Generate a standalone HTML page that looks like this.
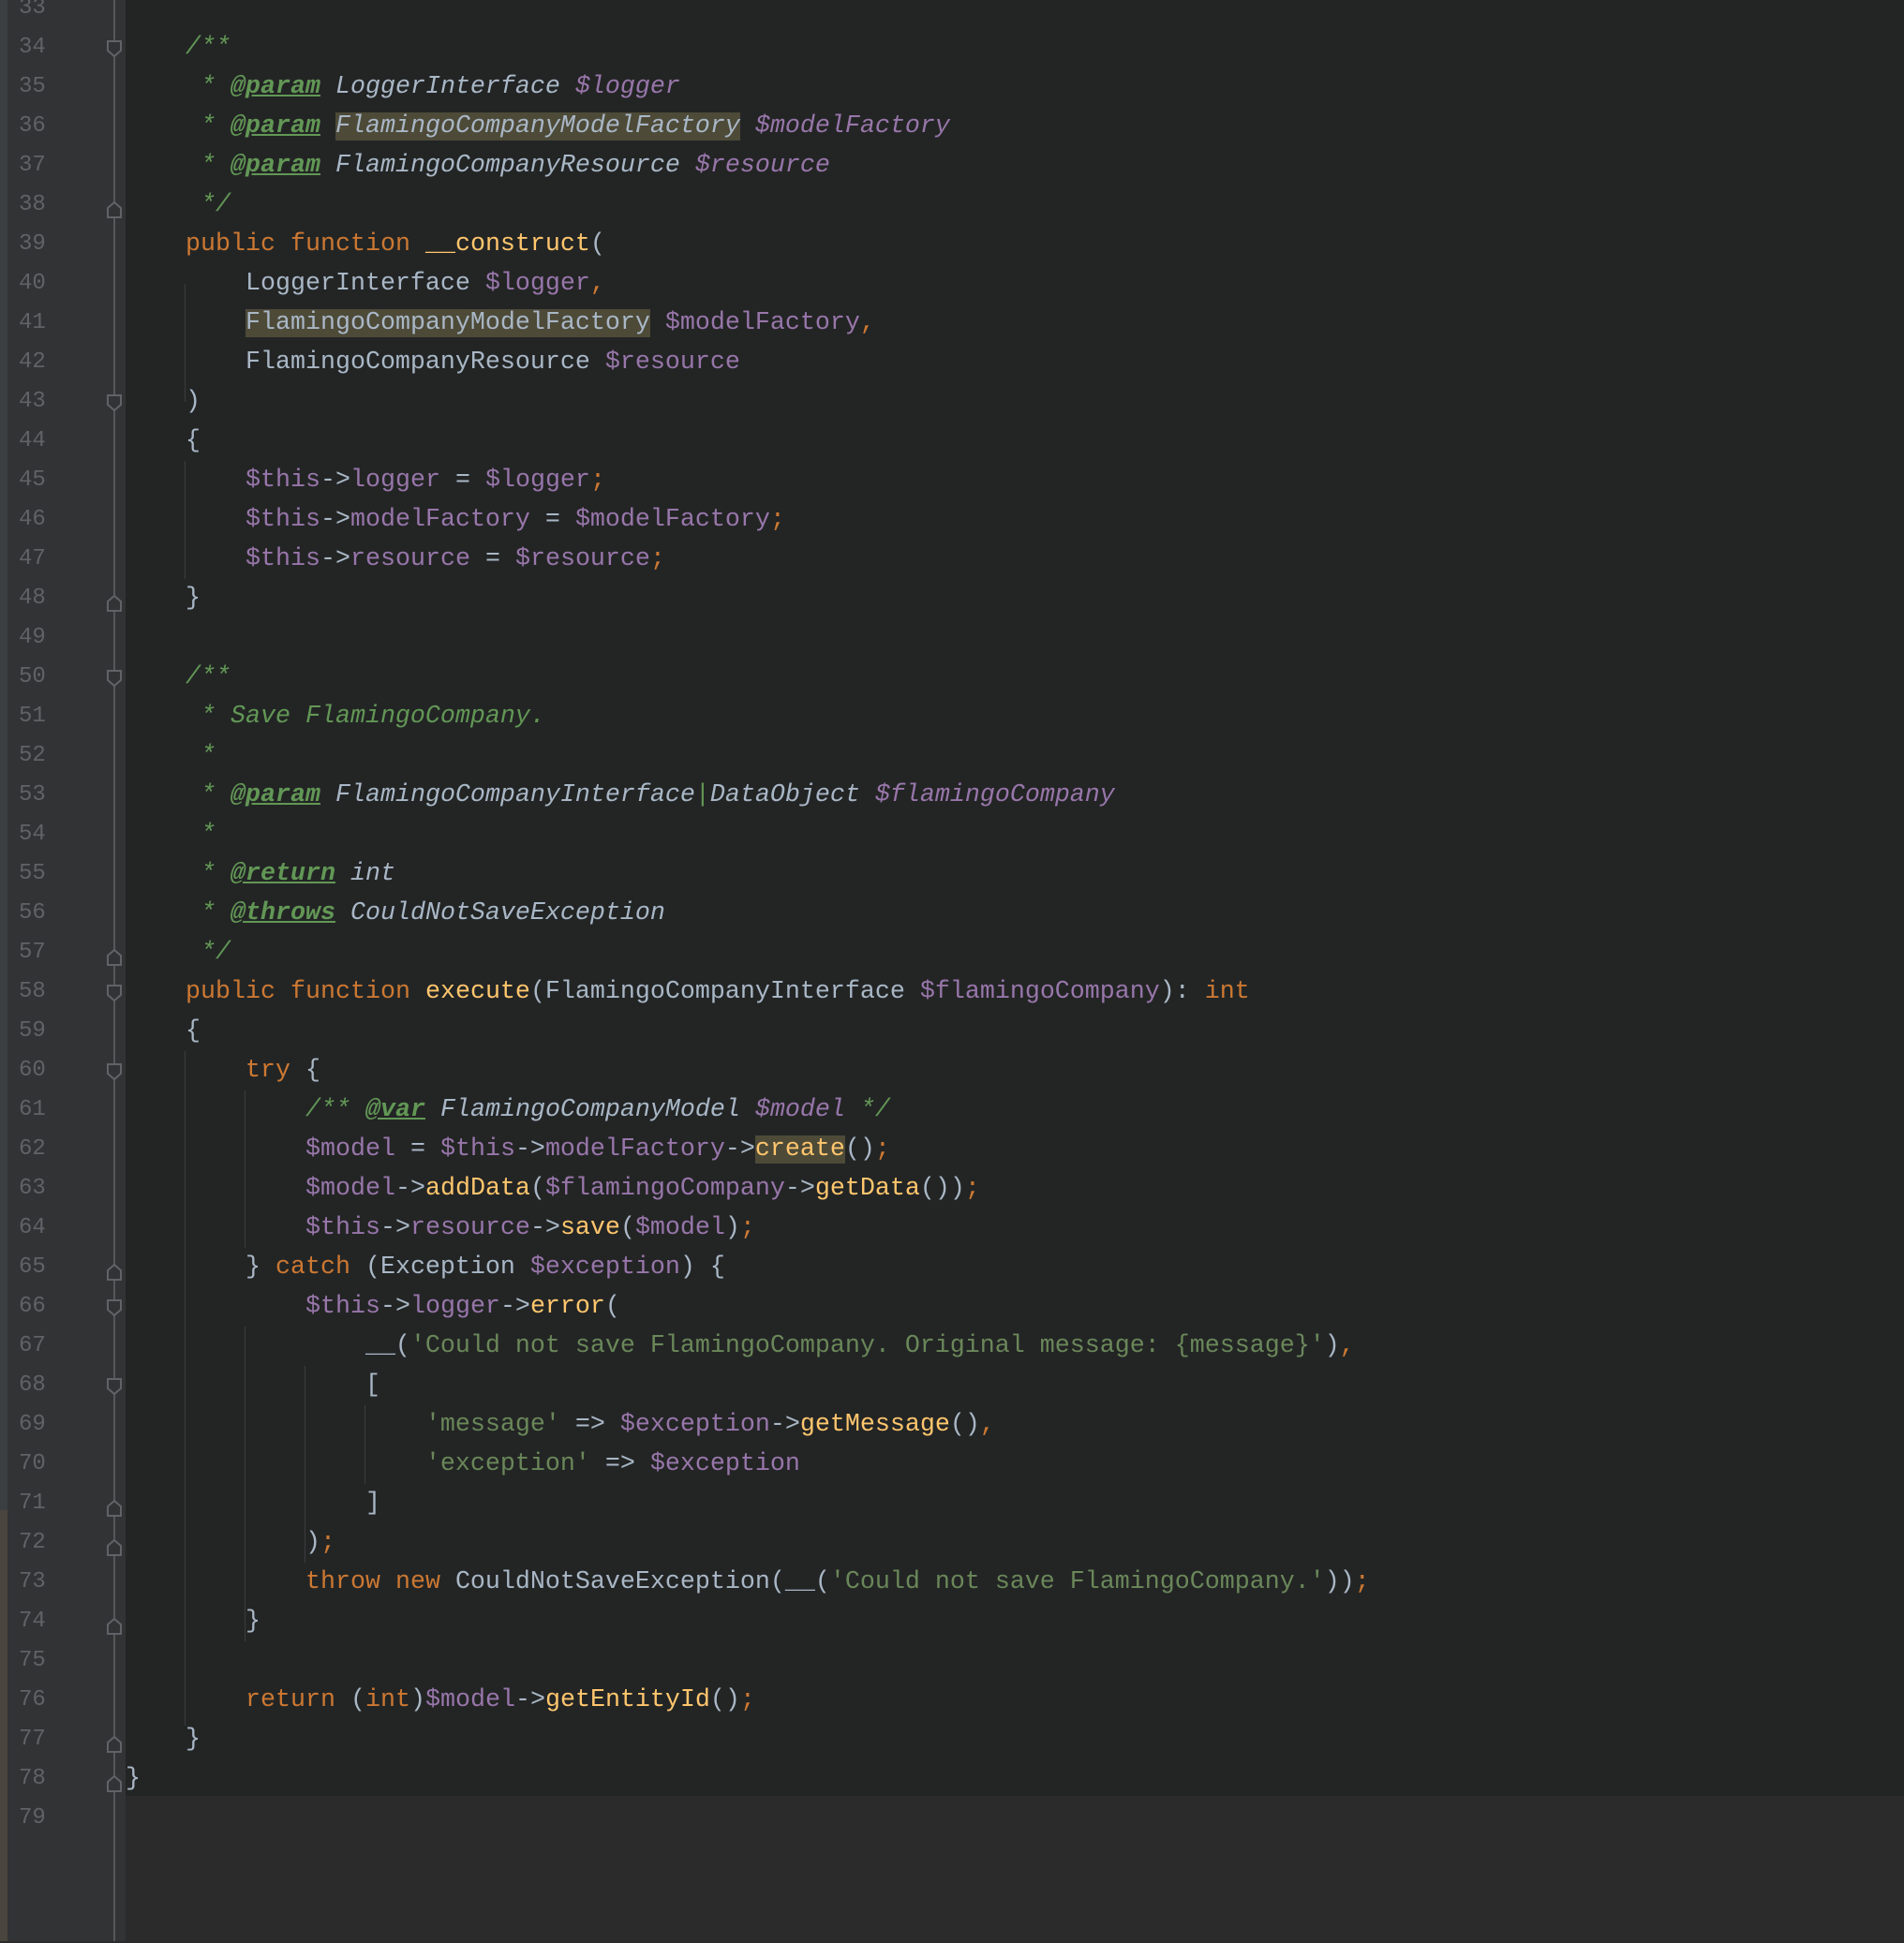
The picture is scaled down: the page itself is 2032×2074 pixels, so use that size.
<!DOCTYPE html>
<html><head><meta charset="utf-8"><style>
html,body{margin:0;padding:0;width:2032px;height:2072px;overflow:hidden;background:#2b2b2b;}
#strip{position:absolute;left:0;top:0;width:8px;height:1612px;background:#3c3f41;}
#strip2{position:absolute;left:0;top:1612px;width:8px;height:460px;background:#4b463d;}
#gutter{position:absolute;left:8px;top:0;width:126px;height:2072px;background:#313335;}
#fold{position:absolute;left:121px;top:0;width:2px;height:2072px;background:#555759;}
#codebg{position:absolute;left:134px;top:0;width:1898px;height:1917px;background:#232525;}
.ln{position:absolute;left:20px;width:40px;font:24px "Liberation Mono",monospace;color:#606366;line-height:42px;}
.code{position:absolute;left:134px;font:26.67px "Liberation Mono",monospace;color:#a9b7c6;line-height:42px;white-space:pre;}
.g{position:absolute;width:1px;background:#3a3c3d;}
.k{color:#cc7832}.v{color:#9876aa}.f{color:#ffc66d}.s{color:#6a8759}
.c{color:#629755;font-style:italic}.t{color:#629755;font-style:italic;font-weight:bold;text-decoration:underline}
.ct{color:#a9b7c6;font-style:italic}.cv{color:#9876aa;font-style:italic}
.h{background:#4d4a38}
</style></head><body>
<div id="strip"></div><div id="strip2"></div>
<div id="gutter"></div><div id="fold"></div><div id="codebg"></div>
<div class="g" style="left:197px;top:303px;height:126px"></div>
<div class="g" style="left:197px;top:492px;height:126px"></div>
<div class="g" style="left:197px;top:1122px;height:720px"></div>
<div class="g" style="left:261px;top:1164px;height:168px"></div>
<div class="g" style="left:261px;top:1416px;height:336px"></div>
<div class="g" style="left:325px;top:1458px;height:210px"></div>
<div class="g" style="left:389px;top:1500px;height:84px"></div>
<svg style="position:absolute;left:0;top:2px" width="134" height="2072">
<g fill="#313335" stroke="#606366" stroke-width="2">
<path d="M115 42h14v10l-7 6l-7-6z"/><path d="M115 230v-10l7-6l7 6v10z"/>
<path d="M115 420h14v10l-7 6l-7-6z"/><path d="M115 650v-10l7-6l7 6v10z"/>
<path d="M115 714h14v10l-7 6l-7-6z"/><path d="M115 1028v-10l7-6l7 6v10z"/>
<path d="M115 1050h14v10l-7 6l-7-6z"/><path d="M115 1134h14v10l-7 6l-7-6z"/>
<path d="M115 1364v-10l7-6l7 6v10z"/><path d="M115 1386h14v10l-7 6l-7-6z"/>
<path d="M115 1470h14v10l-7 6l-7-6z"/><path d="M115 1616v-10l7-6l7 6v10z"/>
<path d="M115 1658v-10l7-6l7 6v10z"/><path d="M115 1742v-10l7-6l7 6v10z"/>
<path d="M115 1868v-10l7-6l7 6v10z"/><path d="M115 1910v-10l7-6l7 6v10z"/>
</g></svg>
<div class="ln" style="top:-12px">33<br>34<br>35<br>36<br>37<br>38<br>39<br>40<br>41<br>42<br>43<br>44<br>45<br>46<br>47<br>48<br>49<br>50<br>51<br>52<br>53<br>54<br>55<br>56<br>57<br>58<br>59<br>60<br>61<br>62<br>63<br>64<br>65<br>66<br>67<br>68<br>69<br>70<br>71<br>72<br>73<br>74<br>75<br>76<br>77<br>78<br>79</div>
<div class="code" style="top:-12px"> 
    <span class="c">/**</span>
<span class="c">     * </span><span class="t">@param</span><span class="ct"> LoggerInterface </span><span class="cv">$logger</span>
<span class="c">     * </span><span class="t">@param</span><span class="ct"> <span class="h">FlamingoCompanyModelFactory</span> </span><span class="cv">$modelFactory</span>
<span class="c">     * </span><span class="t">@param</span><span class="ct"> FlamingoCompanyResource </span><span class="cv">$resource</span>
<span class="c">     */</span>
    <span class="k">public function </span><span class="f">__construct</span>(
        LoggerInterface <span class="v">$logger</span><span class="k">,</span>
        <span class="h">FlamingoCompanyModelFactory</span> <span class="v">$modelFactory</span><span class="k">,</span>
        FlamingoCompanyResource <span class="v">$resource</span>
    )
    {
        <span class="v">$this</span>-&gt;<span class="v">logger</span> = <span class="v">$logger</span><span class="k">;</span>
        <span class="v">$this</span>-&gt;<span class="v">modelFactory</span> = <span class="v">$modelFactory</span><span class="k">;</span>
        <span class="v">$this</span>-&gt;<span class="v">resource</span> = <span class="v">$resource</span><span class="k">;</span>
    }

    <span class="c">/**</span>
<span class="c">     * Save FlamingoCompany.</span>
<span class="c">     *</span>
<span class="c">     * </span><span class="t">@param</span><span class="ct"> FlamingoCompanyInterface</span><span class="c">|</span><span class="ct">DataObject </span><span class="cv">$flamingoCompany</span>
<span class="c">     *</span>
<span class="c">     * </span><span class="t">@return</span><span class="ct"> int</span>
<span class="c">     * </span><span class="t">@throws</span><span class="ct"> CouldNotSaveException</span>
<span class="c">     */</span>
    <span class="k">public function </span><span class="f">execute</span>(FlamingoCompanyInterface <span class="v">$flamingoCompany</span>): <span class="k">int</span>
    {
        <span class="k">try</span> {
            <span class="c">/** </span><span class="t">@var</span><span class="ct"> FlamingoCompanyModel </span><span class="cv">$model</span><span class="c"> */</span>
            <span class="v">$model</span> = <span class="v">$this</span>-&gt;<span class="v">modelFactory</span>-&gt;<span class="f h">create</span>()<span class="k">;</span>
            <span class="v">$model</span>-&gt;<span class="f">addData</span>(<span class="v">$flamingoCompany</span>-&gt;<span class="f">getData</span>())<span class="k">;</span>
            <span class="v">$this</span>-&gt;<span class="v">resource</span>-&gt;<span class="f">save</span>(<span class="v">$model</span>)<span class="k">;</span>
        } <span class="k">catch</span> (Exception <span class="v">$exception</span>) {
            <span class="v">$this</span>-&gt;<span class="v">logger</span>-&gt;<span class="f">error</span>(
                __(<span class="s">'Could not save FlamingoCompany. Original message: {message}'</span>)<span class="k">,</span>
                [
                    <span class="s">'message'</span> =&gt; <span class="v">$exception</span>-&gt;<span class="f">getMessage</span>()<span class="k">,</span>
                    <span class="s">'exception'</span> =&gt; <span class="v">$exception</span>
                ]
            )<span class="k">;</span>
            <span class="k">throw new </span>CouldNotSaveException(__(<span class="s">'Could not save FlamingoCompany.'</span>))<span class="k">;</span>
        }

        <span class="k">return </span>(<span class="k">int</span>)<span class="v">$model</span>-&gt;<span class="f">getEntityId</span>()<span class="k">;</span>
    }
}
</div>
</body></html>
